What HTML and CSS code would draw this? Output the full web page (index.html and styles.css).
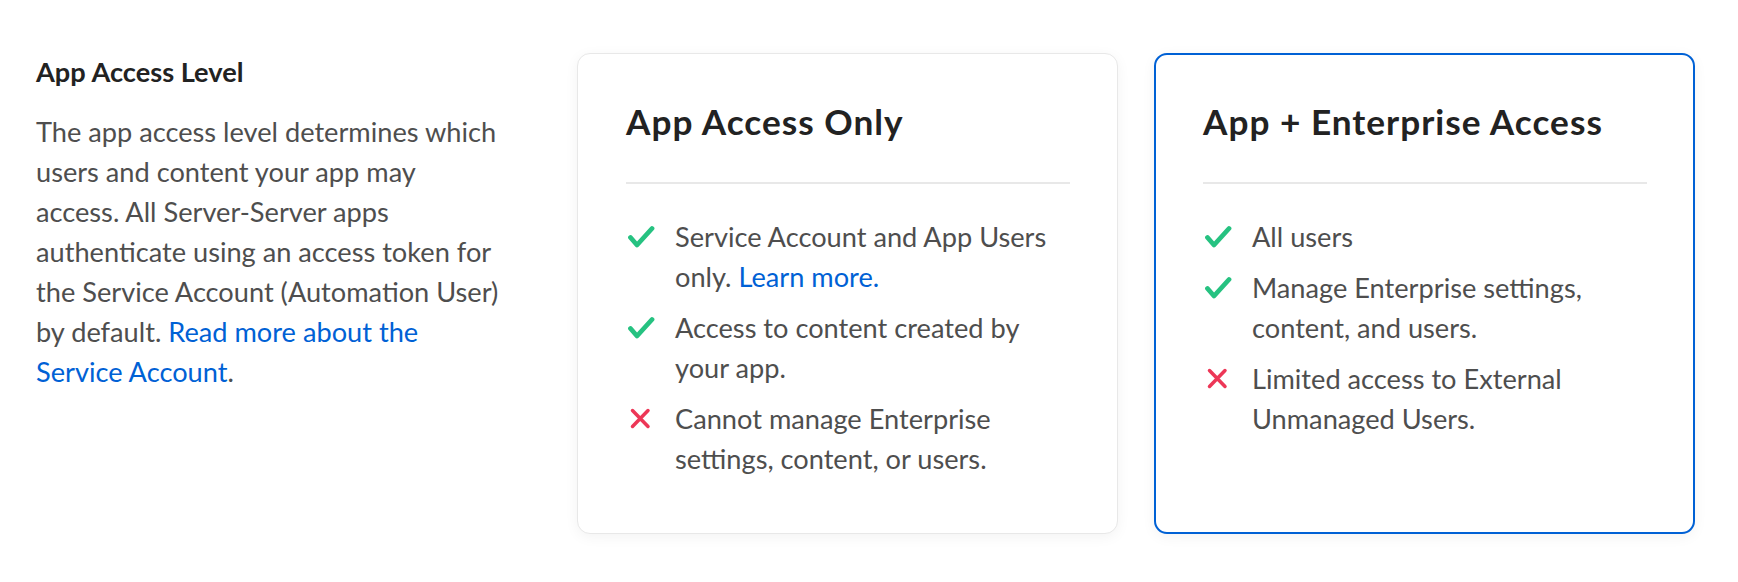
FILE: index.html
```html
<!DOCTYPE html>
<html lang="en">
<head>
<meta charset="utf-8">
<title>App Access Level</title>
<link rel="stylesheet" href="styles.css">
</head>
<body>
<div class="page">
  <section class="intro">
    <h2 class="intro-title">App Access Level</h2>
    <p class="intro-text">The app access level determines which users and content your app may access. All Server-Server apps authenticate using an access token for the Service Account (Automation User) by default. <a class="link" href="#">Read more about the Service Account</a>.</p>
  </section>
  <div class="cards">
    <div class="card">
      <h3 class="card-title">App Access Only</h3>
      <hr class="divider">
      <ul class="items">
        <li class="item">
          <span class="icon"><svg width="28" height="24" viewBox="0 0 28 24"><path d="M3.5 12.5 L10 20 L25 3.5" fill="none" stroke="#26c281" stroke-width="4.8" stroke-linecap="round" stroke-linejoin="round"/></svg></span>
          <span class="item-text">Service Account and App Users only. <a class="link" href="#">Learn more.</a></span>
        </li>
        <li class="item">
          <span class="icon"><svg width="28" height="24" viewBox="0 0 28 24"><path d="M3.5 12.5 L10 20 L25 3.5" fill="none" stroke="#26c281" stroke-width="4.8" stroke-linecap="round" stroke-linejoin="round"/></svg></span>
          <span class="item-text">Access to content created by your app.</span>
        </li>
        <li class="item">
          <span class="icon"><svg width="28" height="24" viewBox="0 0 28 24"><path d="M5.5 3.5 L21 19.5 M21 3.5 L5.5 19.5" fill="none" stroke="#ed3757" stroke-width="3.5" stroke-linecap="round"/></svg></span>
          <span class="item-text">Cannot manage Enterprise settings, content, or users.</span>
        </li>
      </ul>
    </div>
    <div class="card card-selected">
      <h3 class="card-title">App + Enterprise Access</h3>
      <hr class="divider">
      <ul class="items">
        <li class="item">
          <span class="icon"><svg width="28" height="24" viewBox="0 0 28 24"><path d="M3.5 12.5 L10 20 L25 3.5" fill="none" stroke="#26c281" stroke-width="4.8" stroke-linecap="round" stroke-linejoin="round"/></svg></span>
          <span class="item-text">All users</span>
        </li>
        <li class="item">
          <span class="icon"><svg width="28" height="24" viewBox="0 0 28 24"><path d="M3.5 12.5 L10 20 L25 3.5" fill="none" stroke="#26c281" stroke-width="4.8" stroke-linecap="round" stroke-linejoin="round"/></svg></span>
          <span class="item-text">Manage Enterprise settings, content, and users.</span>
        </li>
        <li class="item">
          <span class="icon"><svg width="28" height="24" viewBox="0 0 28 24"><path d="M5.5 3.5 L21 19.5 M21 3.5 L5.5 19.5" fill="none" stroke="#ed3757" stroke-width="3.5" stroke-linecap="round"/></svg></span>
          <span class="item-text">Limited access to External Unmanaged Users.</span>
        </li>
      </ul>
    </div>
  </div>
</div>
</body>
</html>
```
FILE: styles.css
```css
* { box-sizing: border-box; }
html, body { margin: 0; padding: 0; background: #ffffff; }
body {
  font-family: Lato, "Open Sans", sans-serif;
  color: #4e4e4e;
  width: 1738px;
  height: 582px;
  overflow: hidden;
}
.page {
  display: flex;
  align-items: flex-start;
  gap: 73px;
  padding: 53px 43px 0 36px;
}
.intro {
  flex: none;
  width: 468px;
}
.intro-title {
  margin: 0;
  font-size: 27.2px;
  line-height: 38px;
  font-weight: 700;
  color: #222222;
}
.intro-text {
  margin: 21px 0 0;
  font-size: 27.2px;
  line-height: 40px;
}
.link {
  color: #0061d5;
  text-decoration: none;
}
.cards {
  flex: 1;
  display: grid;
  grid-template-columns: 1fr 1fr;
  gap: 36px;
}
.card {
  background: #ffffff;
  border: 1px solid #e8e8e8;
  border-radius: 13px;
  padding: 44px 47px 54px 48px;
  box-shadow: 0 3px 14px rgba(0, 0, 0, 0.05);
}
.card-selected {
  border: 2px solid #0061d5;
  padding: 43px 46px 53px 47px;
}
.card-title {
  margin: 0;
  font-size: 35.2px;
  letter-spacing: 1px;
  line-height: 46px;
  font-weight: 700;
  color: #222222;
}
.divider {
  margin: 38px 0 0;
  border: 0;
  height: 2px;
  background: #e8e8e8;
}
.items {
  list-style: none;
  margin: 33px 0 0;
  padding: 0;
  display: flex;
  flex-direction: column;
  gap: 11px;
}
.item {
  display: flex;
  align-items: flex-start;
  gap: 20px;
  font-size: 27.2px;
  line-height: 40px;
}
.icon {
  flex: none;
  width: 28px;
  height: 40px;
  display: flex;
  align-items: center;
  justify-content: center;
  margin-left: 1px;
}
.icon svg { display: block; }
.item-text {
  flex: none;
  width: 392px;
}
```
